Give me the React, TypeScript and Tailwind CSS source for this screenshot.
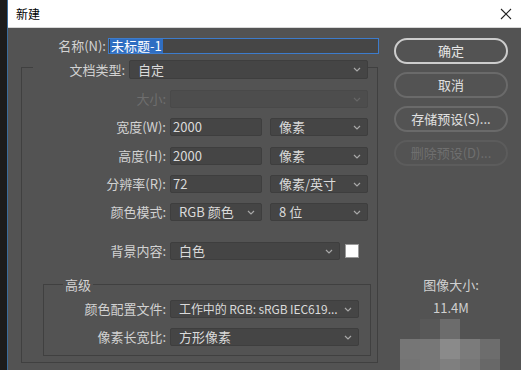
import type { ReactNode } from "react";

const FONT = "font-['Noto_Sans_CJK_SC','Noto_Sans',sans-serif]";

function Chevron({ dim }: { dim?: boolean }) {
  return (
    <svg width="8" height="5" viewBox="0 0 8 5" className="shrink-0">
      <path d="M1 1l3 3 3-3" fill="none" stroke={dim ? "#666" : "#a8a8a8"} strokeWidth="1.2" />
    </svg>
  );
}

function Select({ w, value, dim, tight }: { w: string; value?: string; dim?: boolean; tight?: boolean }) {
  return (
    <div
      className={`${w} h-full flex items-center justify-between pl-[8px] pr-[6px] border rounded-[2px] ${
        dim ? "bg-[#4d4d4d] border-[#494949]" : "bg-[#454545] border-[#3e3e3e]"
      }`}
    >
      <span className={`text-[#dadada] whitespace-nowrap ${tight ? "text-[12px] tracking-[-0.1px]" : ""}`}>{value}</span>
      <Chevron dim={dim} />
    </div>
  );
}

function TextBox({ w, value }: { w: string; value: string }) {
  return (
    <div className={`${w} h-full flex items-center pl-[2px] bg-[#454545] border border-[#3e3e3e] rounded-[2px] text-[#dadada]`}>
      {value}
    </div>
  );
}

function Row({ label, lw, mt, children, dim }: { label: string; lw: string; mt: string; children: ReactNode; dim?: boolean }) {
  return (
    <div className={`flex items-center h-[18px] ${mt}`}>
      <div className={`${lw} pr-[4px] text-right whitespace-nowrap ${dim ? "text-[#6e6e6e]" : "text-[#d2d2d2]"}`}>{label}</div>
      {children}
    </div>
  );
}

function Button({ children, kind }: { children: ReactNode; kind: "primary" | "normal" | "disabled" }) {
  const cls =
    kind === "primary"
      ? "border-[#cdcdcd] text-[#e6e6e6]"
      : kind === "normal"
      ? "border-[#6a6a6a] text-[#e0e0e0]"
      : "border-[#5c5c5c] text-[#6f6f6f]";
  return (
    <div className={`h-[26px] rounded-full border-2 flex items-center justify-center ${cls}`}>{children}</div>
  );
}

const MOSAIC = [
  ["", "#585858", "#6c6c6c", "", ""],
  ["#767676", "#777777", "#8a8a8a", "#7b7b7b", "#6d6d6d"],
  ["#747474", "#777777", "#7f7f7f", "#777777", "#686868"],
];

export default function App() {
  return (
    <div className={`w-[521px] h-[370px] flex overflow-hidden bg-[#1c1c1c] text-[13px] leading-[18px] ${FONT}`}>
      <div className="w-[7px] shrink-0" />
      <div className="w-[1px] shrink-0 bg-[#3a6c9c]" />
      <div className="flex-1 flex flex-col">
        {/* title bar */}
        <div className="h-[28px] shrink-0 bg-white border-b border-[#d8d8d8] flex items-center justify-between pl-[8px] pr-[9px]">
          <span className="text-[12px] text-black">新建</span>
          <svg width="12" height="12" viewBox="0 0 12 12">
            <path d="M1 1l10 10M11 1L1 11" stroke="#222" strokeWidth="1.1" />
          </svg>
        </div>

        <div className="flex-1 bg-[#535353] flex">
          {/* form */}
          <div className="w-[372px] shrink-0 flex flex-col pt-[10px]">
            <div className="flex items-center h-[16px]">
              <div className="w-[98px] text-right text-[#d2d2d2]">名称(N):</div>
              <div className="ml-[2px] w-[271px] h-full flex items-center pl-[1px] bg-[#464646] border border-[#3d7ccc]">
                <span className="bg-[#2f6ec2] text-white leading-[14px] px-[1px]">未标题-1</span>
              </div>
            </div>

            <div className="ml-[13px] mt-[13px] w-[357px] h-[296px] border border-[#404040] flex flex-col">
              <div className="flex items-center h-[19px] -mt-[8px] ml-[11px]">
                <div className="w-[96px] pr-[4px] text-right bg-[#535353] text-[#d2d2d2]">文档类型:</div>
                <Select w="w-[239px]" value="自定" />
              </div>

              <Row label="大小:" lw="w-[148px]" mt="mt-[11px]" dim>
                <Select w="w-[198px]" dim />
              </Row>
              <Row label="宽度(W):" lw="w-[148px]" mt="mt-[10px]">
                <TextBox w="w-[92px]" value="2000" />
                <div className="ml-[8px] h-full flex">
                  <Select w="w-[98px]" value="像素" />
                </div>
              </Row>
              <Row label="高度(H):" lw="w-[148px]" mt="mt-[11px]">
                <TextBox w="w-[92px]" value="2000" />
                <div className="ml-[8px] h-full flex">
                  <Select w="w-[98px]" value="像素" />
                </div>
              </Row>
              <Row label="分辨率(R):" lw="w-[148px]" mt="mt-[10px]">
                <TextBox w="w-[92px]" value="72" />
                <div className="ml-[8px] h-full flex">
                  <Select w="w-[98px]" value="像素/英寸" />
                </div>
              </Row>
              <Row label="颜色模式:" lw="w-[148px]" mt="mt-[10px]">
                <Select w="w-[92px]" value="RGB 颜色" />
                <div className="ml-[8px] h-full flex">
                  <Select w="w-[98px]" value="8 位" />
                </div>
              </Row>
              <Row label="背景内容:" lw="w-[148px]" mt="mt-[21px]">
                <Select w="w-[170px]" value="白色" />
                <div className="ml-[5px] w-[14px] h-[14px] bg-white border border-[#9a9a9a]" />
              </Row>

              <div className="ml-[21px] mt-[24px] w-[328px] h-[72px] border border-[#404040] flex flex-col">
                <div className="-mt-[9px] ml-[19px] self-start px-[2px] bg-[#535353] text-[#d2d2d2] h-[18px]">高级</div>
                <Row label="颜色配置文件:" lw="w-[126px]" mt="mt-[6px]">
                  <Select w="w-[189px]" value="工作中的 RGB: sRGB IEC619..." tight />
                </Row>
                <Row label="像素长宽比:" lw="w-[126px]" mt="mt-[10px]">
                  <Select w="w-[189px]" value="方形像素" />
                </Row>
              </div>
            </div>
          </div>

          {/* buttons */}
          <div className="ml-[14px] w-[114px] shrink-0 flex flex-col pt-[10px]">
            <div className="flex flex-col gap-[8px]">
              <Button kind="primary">确定</Button>
              <Button kind="normal">取消</Button>
              <Button kind="normal">存储预设(S)...</Button>
              <Button kind="disabled">删除预设(D)...</Button>
            </div>
            <div className="mt-[111px] text-center text-[#d0d0d0] leading-[16px]">图像大小:</div>
            <div className="mt-[7px] text-center text-[#d0d0d0] leading-[16px]">11.4M</div>
            <div className="mt-[3px] ml-[6px] grid grid-cols-[repeat(5,20px)] grid-rows-[repeat(3,20px)]">
              {MOSAIC.flat().map((c, i) => (
                <div key={i} style={{ background: c || "transparent" }} />
              ))}
            </div>
          </div>
        </div>
      </div>
    </div>
  );
}
